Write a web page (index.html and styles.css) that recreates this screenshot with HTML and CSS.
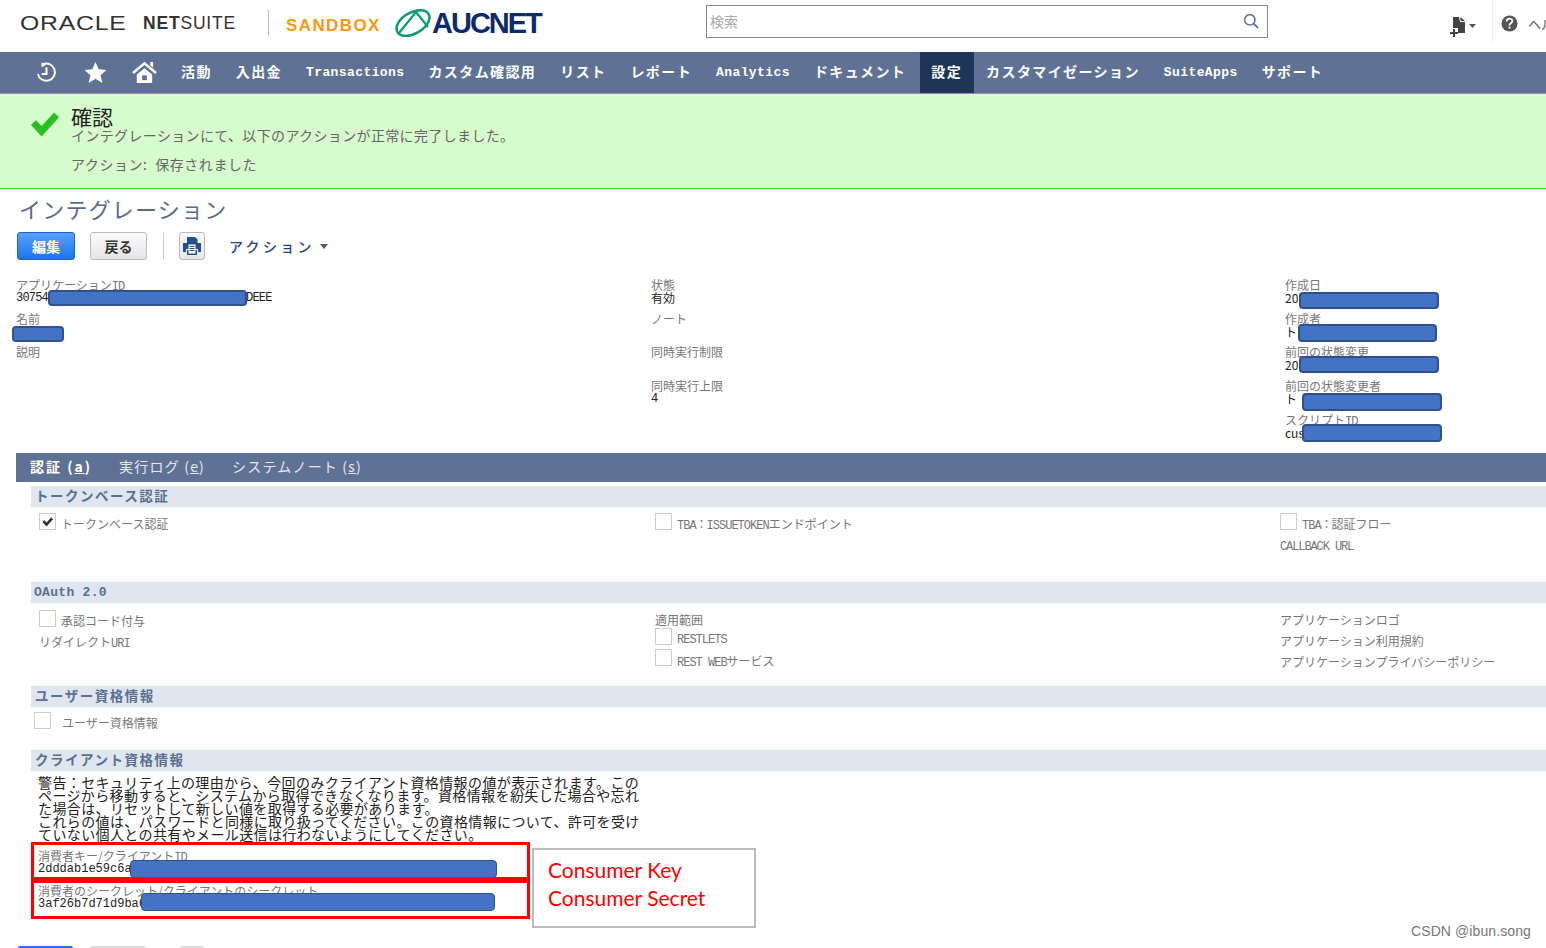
FILE: index.html
```html
<!DOCTYPE html>
<html lang="ja">
<head>
<meta charset="utf-8">
<title>インテグレーション</title>
<link rel="stylesheet" href="styles.css">
</head>
<body>
<div class="page">
  <header class="topbar">
    <div class="oracle"><span class="oracle-a">ORACLE</span><span class="oracle-b"><b>NET</b>SUITE</span></div>
    <div class="logo-sep"></div>
    <div class="sandbox">SANDBOX</div>
    <svg class="auc-mark" viewBox="0 0 36 30"><ellipse cx="18" cy="15" rx="18" ry="10.500" transform="rotate(-30 18 15)" fill="none" stroke="#0f9b72" stroke-width="2.500"/><path d="M4 25 L21 4 L33 19" fill="none" stroke="#0f9b72" stroke-width="2.300"/></svg>
    <div class="aucnet">AUCNET</div>
    <div class="search"><span class="search-ph">検索</span>
      <svg class="search-ico" viewBox="0 0 16 16"><circle cx="6.800" cy="6.800" r="5.200" fill="none" stroke="#5f7aa5" stroke-width="1.600"/><path d="M10.500 10.500 L15 15" stroke="#5f7aa5" stroke-width="1.800"/></svg>
    </div>
    <svg class="role-ico" viewBox="0 0 26 20"><path d="M3 0h6l1 5h5v11H8v-5H3z" fill="#444"/><path d="M10.500 0l4.500 4h-4.500z" fill="#444"/><path d="M0 15h3v-3h2v3h3v2H5v3H3v-3H0z" fill="#444"/><path d="M19 7h7l-3.500 4z" fill="#555"/></svg>
    <div class="top-sep"></div>
    <svg class="help-ico" viewBox="0 0 18 18"><circle cx="9" cy="9" r="8.500" fill="#555"/><path d="M6 7c0-4 6-4 6-.5 0 2-3 2-3 4.500" fill="none" stroke="#fff" stroke-width="1.900"/><rect x="8" y="12.300" width="2" height="2" fill="#fff"/></svg>
    <div class="help-text">ヘルプ</div>
  </header>

  <nav class="nav">
    <svg class="nav-ico ico-clock" viewBox="0 0 22 24"><path d="M7 3.500A9 9 0 1 1 2 13.500" fill="none" stroke="#fff" stroke-width="2"/><path d="M5.500 1.500l5 2.500-4.500 2.500z" fill="#fff"/><path d="M11 6.500v7H6" fill="none" stroke="#fff" stroke-width="2"/></svg>
    <svg class="nav-ico ico-star" viewBox="0 0 24 24"><path d="M12 1l3.300 7.700 8.200.7-6.200 5.400 1.900 8.100L12 18.600 4.800 22.900l1.900-8.100L.5 9.400l8.200-.7z" fill="#fff"/></svg>
    <svg class="nav-ico ico-home" viewBox="0 0 26 24"><path d="M1 12.500L13 2.500l12 10" fill="none" stroke="#fff" stroke-width="2.600"/><path d="M19 1h3v6l-3-2.500z" fill="#fff"/><path d="M5 14l8-6.500 8 6.500v9H5z" fill="#fff"/><rect x="10.500" y="15" width="5" height="5" fill="#5f7295"/></svg>
    <div class="nav-items">
      <a class="nav-item">活動</a>
      <a class="nav-item">入出金</a>
      <a class="nav-item latin">Transactions</a>
      <a class="nav-item">カスタム確認用</a>
      <a class="nav-item">リスト</a>
      <a class="nav-item">レポート</a>
      <a class="nav-item latin">Analytics</a>
      <a class="nav-item">ドキュメント</a>
      <a class="nav-item active">設定</a>
      <a class="nav-item">カスタマイゼーション</a>
      <a class="nav-item latin">SuiteApps</a>
      <a class="nav-item">サポート</a>
    </div>
  </nav>

  <section class="banner">
    <svg class="banner-check" viewBox="0 0 30 26"><path d="M1 14l5-5 6 6L25 1l5 5-18 20z" fill="#27c21b"/></svg>
    <div class="banner-text">
      <div class="banner-title">確認</div>
      <div class="banner-msg">インテグレーションにて、以下のアクションが正常に完了しました。</div>
      <div class="banner-msg banner-action">アクション: 保存されました</div>
    </div>
  </section>

  <h1 class="title">インテグレーション</h1>

  <div class="toolbar">
    <button class="btn btn-primary">編集</button>
    <button class="btn btn-back">戻る</button>
    <div class="tool-sep"></div>
    <button class="btn btn-print"><svg viewBox="0 0 20 20"><path d="M5 1h8l2.500 2.500V7H5z" fill="#24508f"/><path d="M1 7h18v9h-3v-3H4v3H1z" fill="#24508f"/><path d="M5 14h10v5H5z" fill="#24508f"/><path d="M6.500 8.500h7v9h-7z" fill="#fff"/><path d="M7.500 10.500h5M7.500 12.500h5M7.500 14.500h5" stroke="#24508f"/></svg></button>
    <div class="actions">アクション<span class="caret"></span></div>
  </div>

  <div class="fields">
    <div class="field-col col-a">
      <div class="field"><div class="label">アプリケーション<span class="mono">ID</span></div><div class="value mono">30754<span class="gap-a"></span>DEEE</div></div>
      <div class="field"><div class="label">名前</div></div>
      <div class="field"><div class="label">説明</div></div>
    </div>
    <div class="field-col col-b">
      <div class="field"><div class="label">状態</div><div class="value">有効</div></div>
      <div class="field"><div class="label">ノート</div></div>
      <div class="field"><div class="label">同時実行制限</div></div>
      <div class="field"><div class="label">同時実行上限</div><div class="value mono">4</div></div>
    </div>
    <div class="field-col col-c">
      <div class="field"><div class="label">作成日</div><div class="value">20</div></div>
      <div class="field"><div class="label">作成者</div><div class="value">ト</div></div>
      <div class="field"><div class="label">前回の状態変更</div><div class="value">20</div></div>
      <div class="field"><div class="label">前回の状態変更者</div><div class="value">ト</div></div>
      <div class="field"><div class="label">スクリプト<span class="mono">ID</span></div><div class="value">cus</div></div>
    </div>
  </div>

  <div class="tabs">
    <a class="tab tab-active">認証 (<u>a</u>)</a>
    <a class="tab">実行ログ (<u>e</u>)</a>
    <a class="tab">システムノート (<u>s</u>)</a>
  </div>

  <div class="sections">
    <h2 class="sec-head sec-first">トークンベース認証</h2>
    <div class="sec-grid sec-token">
      <div class="cell cell-a"><div class="check-row"><span class="box"><svg viewBox="0 0 14 14"><path d="M1.500 7.500l2-2 2.500 2.500 5-5.500 2 2-7 8z" fill="#333"/></svg></span><span class="check-label">トークンベース認証</span></div></div>
      <div class="cell"><div class="check-row"><span class="box"></span><span class="check-label"><span class="mono">TBA：ISSUETOKEN</span>エンドポイント</span></div></div>
      <div class="cell"><div class="check-row"><span class="box"></span><span class="check-label"><span class="mono">TBA：</span>認証フロー</span></div><div class="plain plain-callback mono">CALLBACK URL</div></div>
    </div>

    <h2 class="sec-head sec-latin">OAuth 2.0</h2>
    <div class="sec-grid sec-oauth">
      <div class="cell cell-a"><div class="check-row"><span class="box"></span><span class="check-label">承認コード付与</span></div><div class="plain plain-redirect">リダイレクト<span class="mono">URI</span></div></div>
      <div class="cell"><div class="plain">適用範囲</div><div class="check-row tight"><span class="box"></span><span class="check-label mono">RESTLETS</span></div><div class="check-row tight"><span class="box"></span><span class="check-label"><span class="mono">REST WEB</span>サービス</span></div></div>
      <div class="cell"><div class="plain">アプリケーションロゴ</div><div class="plain plain-next">アプリケーション利用規約</div><div class="plain plain-next">アプリケーションプライバシーポリシー</div></div>
    </div>

    <h2 class="sec-head">ユーザー資格情報</h2>
    <div class="sec-user"><div class="check-row"><span class="box"></span><span class="check-label user-label">ユーザー資格情報</span></div></div>

    <h2 class="sec-head">クライアント資格情報</h2>
    <div class="warning">警告：セキュリティ上の理由から、今回のみクライアント資格情報の値が表示されます。この<br>ページから移動すると、システムから取得できなくなります。資格情報を紛失した場合や忘れ<br>た場合は、リセットして新しい値を取得する必要があります。<br>これらの値は、パスワードと同様に取り扱ってください。この資格情報について、許可を受け<br>ていない個人との共有やメール送信は行わないようにしてください。</div>
    <div class="cred">
      <div class="label">消費者キー/クライアント<span class="mono">ID</span></div>
      <div class="value mono cred-val">2dddab1e59c6a</div>
    </div>
    <div class="cred cred-2">
      <div class="label">消費者のシークレット/クライアントのシークレット</div>
      <div class="value mono cred-val">3af26b7d71d9ba6</div>
    </div>
  </div>

  <div class="bottom-btns"><span class="bb bb-blue"></span><span class="bb bb-gray"></span><span class="bb bb-print"></span></div>

  <div class="redact r1"></div>
  <div class="redact r2"></div>
  <div class="redact r3"></div>
  <div class="redact r4"></div>
  <div class="redact r5"></div>
  <div class="redact r6"></div>
  <div class="redact r7"></div>
  <div class="redact r8"></div>
  <div class="redact r9"></div>
  <div class="redbox rb1"></div>
  <div class="redbox rb2"></div>
  <div class="note"><div>Consumer Key</div><div>Consumer Secret</div></div>
  <div class="watermark">CSDN @ibun.song</div>
</div>
</body>
</html>
```

FILE: styles.css
```css
* { box-sizing: border-box; }
html, body { margin: 0; padding: 0; background: #fff; }
.page {
  position: relative;
  width: 1546px;
  height: 948px;
  overflow: hidden;
  font-family: "Noto Sans CJK JP", "Liberation Sans", sans-serif;
  font-size: 12px;
  color: #666;
}
.mono { font-family: "Liberation Mono", "Noto Sans CJK JP", monospace; font-size: 12px; letter-spacing: -1px; }

/* header */
.topbar { height: 52px; display: flex; align-items: center; padding: 0 0 6px 20px; overflow: hidden; }
.oracle { display: flex; align-items: center; width: 216px; flex: none; color: #333; font-family: "Liberation Sans", sans-serif; }
.oracle-a { font-size: 20px; width: 123px; letter-spacing: .6px; transform: scaleX(1.24); transform-origin: left; font-weight: 400; }
.oracle-b { font-size: 17.500px; letter-spacing: .8px; }
.oracle-b b { font-weight: 700; }
.logo-sep { width: 1px; height: 26px; background: #bbb; margin: 0 0 0 32px; flex: none; }
.sandbox { color: #f59a0c; font-family: "Liberation Sans", sans-serif; font-weight: 700; font-size: 17px; letter-spacing: 1.400px; margin-left: 17px; margin-top: 5px; width: 96px; flex: none; }
.auc-mark { width: 36px; height: 30px; margin-left: 13px; flex: none; }
.aucnet { color: #0e2a6e; font-family: "Liberation Sans", sans-serif; font-weight: 700; font-size: 29px; letter-spacing: -2px; margin-left: 1px; width: 274px; flex: none; }
.search { width: 562px; height: 33px; border: 1px solid #888; display: flex; align-items: center; justify-content: space-between; padding: 0 8px 2px 3px; margin-top: -3px; background: #fff; flex: none; }
.search-ph { color: #aaa; font-size: 14px; }
.search-ico { width: 16px; height: 16px; }
.role-ico { width: 26px; height: 20px; margin-left: 182px; margin-top: 8px; flex: none; }
.top-sep { width: 1px; height: 42px; background: #eee; margin-left: 16px; margin-top: -4px; flex: none; }
.help-ico { width: 17px; height: 17px; margin-left: 8px; flex: none; }
.help-text { font-size: 13px; margin-left: 10px; white-space: nowrap; color: #555; }

/* nav */
.nav { height: 41px; background: #5f7295; display: flex; align-items: center; padding-left: 36px; }
.nav-ico { flex: none; }
.ico-clock { width: 21px; height: 23px; }
.ico-star { width: 23px; height: 23px; margin-left: 27px; }
.ico-home { width: 25px; height: 23px; margin-left: 25px; }
.nav-items { display: flex; align-items: stretch; height: 41px; margin-left: 12px; }
.nav-item { display: flex; align-items: center; padding: 0 12px 3px; color: #fff; font-weight: 700; font-size: 14px; letter-spacing: 1.400px; white-space: nowrap; }
.nav-item.latin { font-family: "Liberation Mono", monospace; font-size: 13px; letter-spacing: .4px; padding-bottom: 1px; }
.nav-item.active { background: #1f3558; padding: 0 12px 3px 11px; margin: 0 0 0 2px; }

/* banner */
.banner { height: 96px; background: #d7fccd; border-top: 1px solid #3fd037; border-bottom: 1px solid #3fd037; display: flex; padding: 12px 0 0 30px; }
.banner-check { width: 29px; height: 26px; flex: none; margin-top: 5px; }
.banner-text { margin-left: 12px; }
.banner-title { font-size: 21px; line-height: 20px; margin-bottom: 1px; color: #222; }
.banner-msg { font-size: 14px; line-height: 16px; color: #666; letter-spacing: .36px; }
.banner-action { margin-top: 13px; word-spacing: 4px; letter-spacing: .55px; }

/* title + toolbar */
.title { margin: 0; height: 43px; display: flex; align-items: center; padding: 0 0 5px 19px; font-weight: 400; font-size: 22px; letter-spacing: 1.200px; color: #5c6b85; }
.toolbar { height: 28px; display: flex; align-items: center; padding-left: 17px; }
.btn { height: 28px; padding: 0; font-family: inherit; font-size: 14px; font-weight: 700; border-radius: 3px; cursor: pointer; display: flex; align-items: center; justify-content: center; }
.btn-primary { width: 58px; color: #fff; border: 1px solid #1565c8; background: linear-gradient(#57a0ff, #1f74e8); }
.btn-back { width: 57px; margin-left: 15px; color: #333; border: 1px solid #bbb; background: linear-gradient(#fafafa, #e6e6e6); }
.tool-sep { width: 1px; height: 26px; background: #ccc; margin-left: 16px; }
.btn-print { width: 26px; margin-left: 15px; border: 1px solid #bbb; background: linear-gradient(#fafafa, #e6e6e6); }
.btn-print svg { width: 20px; height: 20px; }
.actions { margin-left: 24px; color: #24457f; font-size: 14px; font-weight: 500; letter-spacing: 3.300px; display: flex; align-items: center; }
.caret { width: 0; height: 0; border: 4.500px solid transparent; border-top: 5px solid #4a5c80; border-bottom: 0; margin-left: 5px; }

/* fields */
.fields { display: grid; grid-template-columns: 635px 634px 1fr; height: 193px; padding: 18px 0 0 16px; }
.field { height: 33.700px; }
.label { line-height: 13px; height: 13px; color: #777; white-space: nowrap; }
.value { line-height: 14px; height: 14px; color: #222; white-space: nowrap; }
.value.mono { letter-spacing: -.8px; }
.gap-a { display: inline-block; width: 198px; }

/* tabs */
.tabs { margin-left: 16px; height: 29px; background: #5f7295; display: flex; align-items: center; padding: 0 0 4px 14px; gap: 27px; position: relative; }
.tab { color: #e3e8f0; font-size: 14px; white-space: nowrap; letter-spacing: 1.200px; }
.tab-active { color: #fff; font-weight: 700; position: relative; letter-spacing: 2px; }
.tab-active::after { content: ""; position: absolute; left: 24px; bottom: -10px; border: 6px solid transparent; border-bottom: 4px solid #fff; border-top: 0; }

/* sections */
.sections { margin-left: 31px; }
.sec-head { margin: 0; height: 21px; background: #dfe6ef; color: #5c6f8f; font-size: 13.500px; font-weight: 700; line-height: 19px; padding-left: 4px; letter-spacing: 1.500px; white-space: nowrap; }
.sec-latin { font-family: "Liberation Mono", monospace; font-size: 13px; letter-spacing: .3px; padding-left: 3px; line-height: 21px; }
.sec-first { margin-top: 4px; }
.sec-grid { display: grid; grid-template-columns: 624px 625px 1fr; }
.sec-token { height: 75px; padding-top: 6px; }
.sec-oauth { height: 83px; padding-top: 7px; }
.cell-a { padding-left: 8px; }
.check-row { display: flex; align-items: flex-start; }
.box { width: 17px; height: 17px; border: 1px solid #ccc; background: #fff; flex: none; display: flex; align-items: center; justify-content: center; }
.box svg { width: 13px; height: 13px; }
.check-label { margin: 3px 0 0 5px; line-height: 16px; white-space: nowrap; color: #777; }
.plain { line-height: 16px; color: #777; white-space: nowrap; margin-top: 2px; }
.plain-callback { margin-top: 5px; letter-spacing: -1.100px; }
.plain-redirect { margin-top: 5px; }
.plain-next { margin-top: 5px; }
.tight { height: 21px; }
.tight .check-label { margin-top: 4px; }
.sec-user { height: 43px; padding: 5px 0 0 3px; }
.user-label { margin-left: 11px; }
.warning { font-size: 14px; line-height: 13px; letter-spacing: .38px; color: #222; padding: 5px 0 0 7px; height: 71px; white-space: nowrap; }
.cred { padding: 7px 0 0 7px; height: 38px; }
.cred-2 { height: 40px; padding-top: 4px; }
.value.cred-val { font-size: 12px; letter-spacing: 0; line-height: 15px; height: 15px; }
.cred:first-of-type .cred-val { margin-top: 1px; }

.bottom-btns { position: absolute; left: 18px; top: 946px; display: flex; gap: 17px; }
.bb { display: block; height: 6px; border-radius: 2px; }
.bb-blue { width: 55px; background: #1f74e8; }
.bb-gray { width: 56px; background: #ddd; }
.bb-print { width: 24px; margin-left: 17px; background: #ddd; }

/* overlays */
.redact { position: absolute; background: #4472c4; border: 2px solid #2f528f; border-radius: 4px; }
.r1 { left: 48px; top: 290px; width: 199px; height: 16px; }
.r2 { left: 12px; top: 326px; width: 52px; height: 16px; }
.r3 { left: 1299px; top: 292px; width: 140px; height: 17px; }
.r4 { left: 1298px; top: 324px; width: 139px; height: 18px; }
.r5 { left: 1299px; top: 356px; width: 140px; height: 17px; }
.r6 { left: 1302px; top: 393px; width: 140px; height: 18px; }
.r7 { left: 1302px; top: 424px; width: 140px; height: 18px; }
.r8 { left: 130px; top: 860px; width: 367px; height: 18px; border-width: 1px; }
.r9 { left: 141px; top: 893px; width: 354px; height: 18px; border-width: 1px; }
.redbox { position: absolute; left: 31px; width: 499px; border: 3px solid #f00; }
.rb1 { top: 842px; height: 38px; }
.rb2 { top: 880px; height: 39px; }
.note { position: absolute; left: 532px; top: 848px; width: 224px; height: 80px; border: 2px solid #bbb; background: #fff; padding: 6px 0 0 14px; color: #f00; font-family: Lato, "Liberation Sans", sans-serif; font-size: 21px; line-height: 28px; }
.watermark { position: absolute; left: 1411px; top: 922px; color: #777; font-family: "Liberation Sans", sans-serif; font-size: 14px; line-height: 18px; letter-spacing: .1px; }
```
